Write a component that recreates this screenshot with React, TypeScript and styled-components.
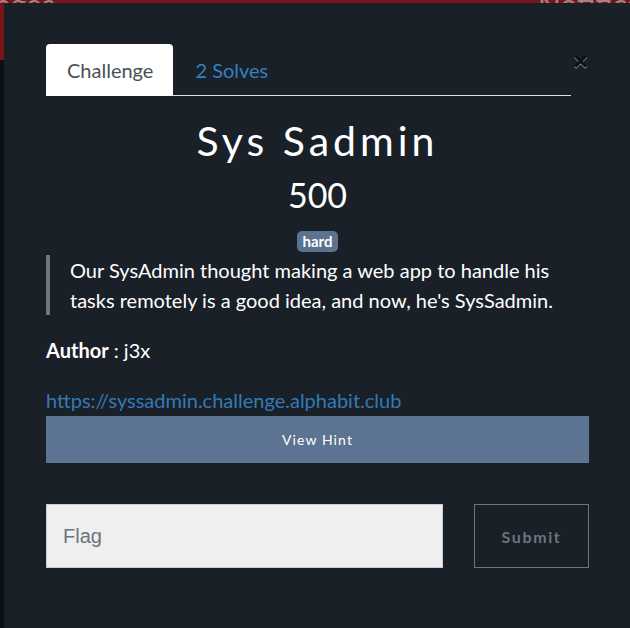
import React from "react";
import styled, { createGlobalStyle } from "styled-components";

const GlobalStyle = createGlobalStyle`
  html, body {
    margin: 0;
    padding: 0;
    background: #0c1013;
    font-family: Lato, "Open Sans", "Liberation Sans", sans-serif;
    overflow: hidden;
  }
  * { box-sizing: border-box; }
`;

const Page = styled.div`
  width: 630px;
  height: 628px;
  position: relative;
  overflow: hidden;
`;

const NavBar = styled.div`
  height: 60px;
  background: #7a1517;
  display: flex;
  align-items: flex-start;
  color: #a68184;
  font-size: 30px;
  line-height: 30px;
`;

const NavText = styled.span<{ $left: number }>`
  margin-top: -11px;
  margin-left: ${(p) => p.$left}px;
`;

const NavIcon = styled.span`
  width: 8px;
  height: 8px;
  margin-left: 458px;
  margin-top: -4px;
  background: #9a6a6d;
`;

const Modal = styled.div`
  position: absolute;
  top: 3px;
  left: 4px;
  width: 626px;
  height: 640px;
  background: #1a2028;
  padding: 41px 41px 0 42px;
  color: #ffffff;
`;

const Header = styled.div`
  display: flex;
  align-items: flex-start;
`;

const Tabs = styled.ul`
  list-style: none;
  margin: 0;
  padding: 0;
  display: flex;
  width: 525px;
  border-bottom: 1px solid #dde1e5;
`;

const Tab = styled.li<{ $active?: boolean }>`
  height: 52px;
  display: flex;
  align-items: center;
  padding: 0 20px 0 21px;
  font-size: 20px;
  margin-bottom: -1px;
  border-radius: 4px 4px 0 0;
  background: ${(p) => (p.$active ? "#ffffff" : "transparent")};
  color: ${(p) => (p.$active ? "#495057" : "#3380c0")};
  padding-left: ${(p) => (p.$active ? 21 : 22)}px;
`;

const Close = styled.button`
  border: 0;
  background: transparent;
  padding: 0;
  margin: 4px 0 0 2px;
  font-family: "Liberation Sans", Arial, sans-serif;
  font-size: 26px;
  font-weight: 700;
  line-height: 1;
  color: #000;
  text-shadow: 0 1px 0 #fff;
  opacity: 0.5;
`;

const Title = styled.h2`
  margin: 20px 0 0 0;
  text-align: center;
  font-weight: 400;
  font-size: 41px;
  letter-spacing: 4px;
  line-height: 50px;
`;

const Points = styled.h3`
  margin: 9px 0 0 0;
  text-align: center;
  font-weight: 400;
  font-size: 34px;
  line-height: 40px;
`;

const BadgeRow = styled.div`
  display: flex;
  justify-content: center;
  margin-top: 16px;
  height: 21px;
`;

const Badge = styled.span`
  display: inline-block;
  background: #5b7290;
  color: #fff;
  font-weight: 700;
  font-size: 15px;
  line-height: 15px;
  height: 21px;
  padding: 3px 6px 3px 6px;
  border-radius: 5px;
`;

const Quote = styled.blockquote`
  margin: 3px 0 0 0;
  padding: 0 0 0 20px;
  border-left: 4px solid #6c757d;
  font-size: 20px;
  line-height: 30px;
`;

const Author = styled.p`
  margin: 21px 0 0 0;
  font-size: 20px;
  line-height: 29px;
`;

const Bold = styled.strong`
  font-weight: 700;
`;

const Link = styled.a`
  display: block;
  margin-top: 21px;
  color: #337ab7;
  font-size: 20px;
  line-height: 29px;
  text-decoration: none;
`;

const HintButton = styled.button`
  display: block;
  width: 100%;
  height: 47px;
  margin-top: 1px;
  border: 0;
  background: #5c7391;
  color: #fff;
  font-family: Lato, sans-serif;
  font-size: 14px;
  letter-spacing: 1.1px;
`;

const FlagRow = styled.div`
  display: flex;
  margin-top: 41px;
  gap: 31px;
`;

const FlagInput = styled.input`
  width: 397px;
  height: 64px;
  background: #efefef;
  border: 1px solid #c9cdd1;
  padding: 0 16px;
  font-family: "Liberation Sans", Arial, sans-serif;
  font-size: 20px;
  color: #495057;
  outline: none;
  &::placeholder {
    color: #6c757d;
  }
`;

const SubmitButton = styled.button`
  width: 115px;
  height: 64px;
  background: transparent;
  border: 1px solid #6c757d;
  color: #6c757d;
  font-family: Lato, sans-serif;
  font-weight: 700;
  font-size: 16px;
  letter-spacing: 1.6px;
`;

export default function App() {
  return (
    <Page>
      <GlobalStyle />
      <NavBar>
        <NavText $left={-6}>nges</NavText>
        <NavIcon />
        <NavText $left={25}>Notification</NavText>
      </NavBar>
      <Modal>
        <Header>
          <Tabs>
            <Tab $active>Challenge</Tab>
            <Tab>2 Solves</Tab>
          </Tabs>
          <Close aria-label="Close">×</Close>
        </Header>
        <Title>Sys Sadmin</Title>
        <Points>500</Points>
        <BadgeRow>
          <Badge>hard</Badge>
        </BadgeRow>
        <Quote>
          Our SysAdmin thought making a web app to handle his tasks remotely is a good idea, and now, he's SysSadmin.
        </Quote>
        <Author>
          <Bold>Author</Bold> : j3x
        </Author>
        <Link href="#">https://syssadmin.challenge.alphabit.club</Link>
        <HintButton>View Hint</HintButton>
        <FlagRow>
          <FlagInput placeholder="Flag" />
          <SubmitButton>Submit</SubmitButton>
        </FlagRow>
      </Modal>
    </Page>
  );
}
